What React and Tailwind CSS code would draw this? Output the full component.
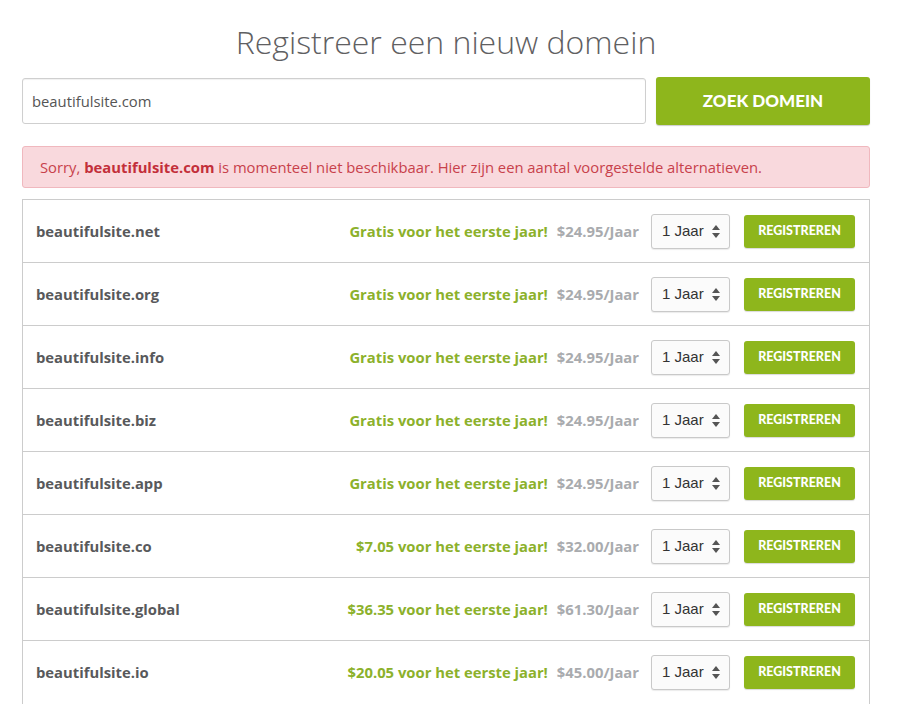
import React from "react";

// Domain suggestions
const domains = [
    { name: "beautifulsite.net", promo: "Gratis voor het eerste jaar!", price: "$24.95/Jaar" },
    { name: "beautifulsite.org", promo: "Gratis voor het eerste jaar!", price: "$24.95/Jaar" },
    { name: "beautifulsite.info", promo: "Gratis voor het eerste jaar!", price: "$24.95/Jaar" },
    { name: "beautifulsite.biz", promo: "Gratis voor het eerste jaar!", price: "$24.95/Jaar" },
    { name: "beautifulsite.app", promo: "Gratis voor het eerste jaar!", price: "$24.95/Jaar" },
    { name: "beautifulsite.co", promo: "$7.05 voor het eerste jaar!", price: "$32.00/Jaar" },
    { name: "beautifulsite.global", promo: "$36.35 voor het eerste jaar!", price: "$61.30/Jaar" },
    { name: "beautifulsite.io", promo: "$20.05 voor het eerste jaar!", price: "$45.00/Jaar" },
];

function YearSelect() {
    return (
        <div className="flex items-center justify-between w-[79px] h-[35px] pl-[10px] pr-[9px] border border-[#c9c9c9] rounded-[3px] bg-[#fbfbfb] shadow-[0_1px_1px_rgba(0,0,0,0.08)] font-['Liberation_Sans',Arial,sans-serif] text-[15px] text-[#333]">
            <span>1 Jaar</span>
            <svg width="8" height="13" viewBox="0 0 8 13">
                <path d="M4 0 L8 5 H0 Z" fill="#555" />
                <path d="M4 13 L8 8 H0 Z" fill="#555" />
            </svg>
        </div>
    );
}

function DomainRow({ name, promo, price }) {
    return (
        <div className="flex items-center h-[63px] pl-[13px] pr-[14px] border-b border-[#cccccc] last:border-b-0 text-[14.8px] font-bold">
            <div className="flex-1 text-[#58595b]">{name}</div>
            <div className="text-[#8cb12b]">{promo}</div>
            <div className="ml-[9px] text-[#a9abae]">{price}</div>
            <div className="ml-[12px] font-normal">
                <YearSelect />
            </div>
            <button className="ml-[14px] w-[111px] h-[33px] rounded-[3px] bg-[#8eb61c] text-white text-[12.5px] font-black font-['Lato',sans-serif] shadow-[0_1px_1px_rgba(0,0,0,0.15)]">
                REGISTREREN
            </button>
        </div>
    );
}

export default function App() {
    return (
        <div className="w-[898px] h-[704px] overflow-hidden bg-white font-['Open_Sans','Noto_Sans',sans-serif]">
            <div className="mx-[22px] w-[848px]">
                <h1 className="pt-[20px] h-[77px] text-center text-[32px] font-light text-[#5f6062] leading-[44px]">
                    Registreer een nieuw domein
                </h1>

                <div className="flex items-center gap-[10px]">
                    <div className="flex items-center w-[624px] h-[46px] border border-[#cfcfcf] rounded-[3px] px-[9px] text-[14.8px] text-[#555] shadow-[inset_0_1px_1px_rgba(0,0,0,0.06)]">
                        beautifulsite.com
                    </div>
                    <button className="w-[214px] h-[48px] rounded-[3px] bg-[#8eb61c] text-white text-[17px] font-black font-['Lato',sans-serif] shadow-[0_1px_1px_rgba(0,0,0,0.2)]">
                        ZOEK DOMEIN
                    </button>
                </div>

                <div className="mt-[21px] flex items-center h-[42px] px-[17px] bg-[#f9d9dd] border border-[#f0b8be] rounded-[3px] text-[14.8px] text-[#c8414b]">
                    <span>
                        Sorry, <b className="font-bold text-[#c32f3a]">beautifulsite.com</b> is momenteel niet beschikbaar. Hier zijn een aantal voorgestelde alternatieven.
                    </span>
                </div>

                <div className="mt-[11px] border border-[#cccccc]">
                    {domains.map((d) => (
                        <DomainRow key={d.name} {...d} />
                    ))}
                </div>
            </div>
        </div>
    );
}
